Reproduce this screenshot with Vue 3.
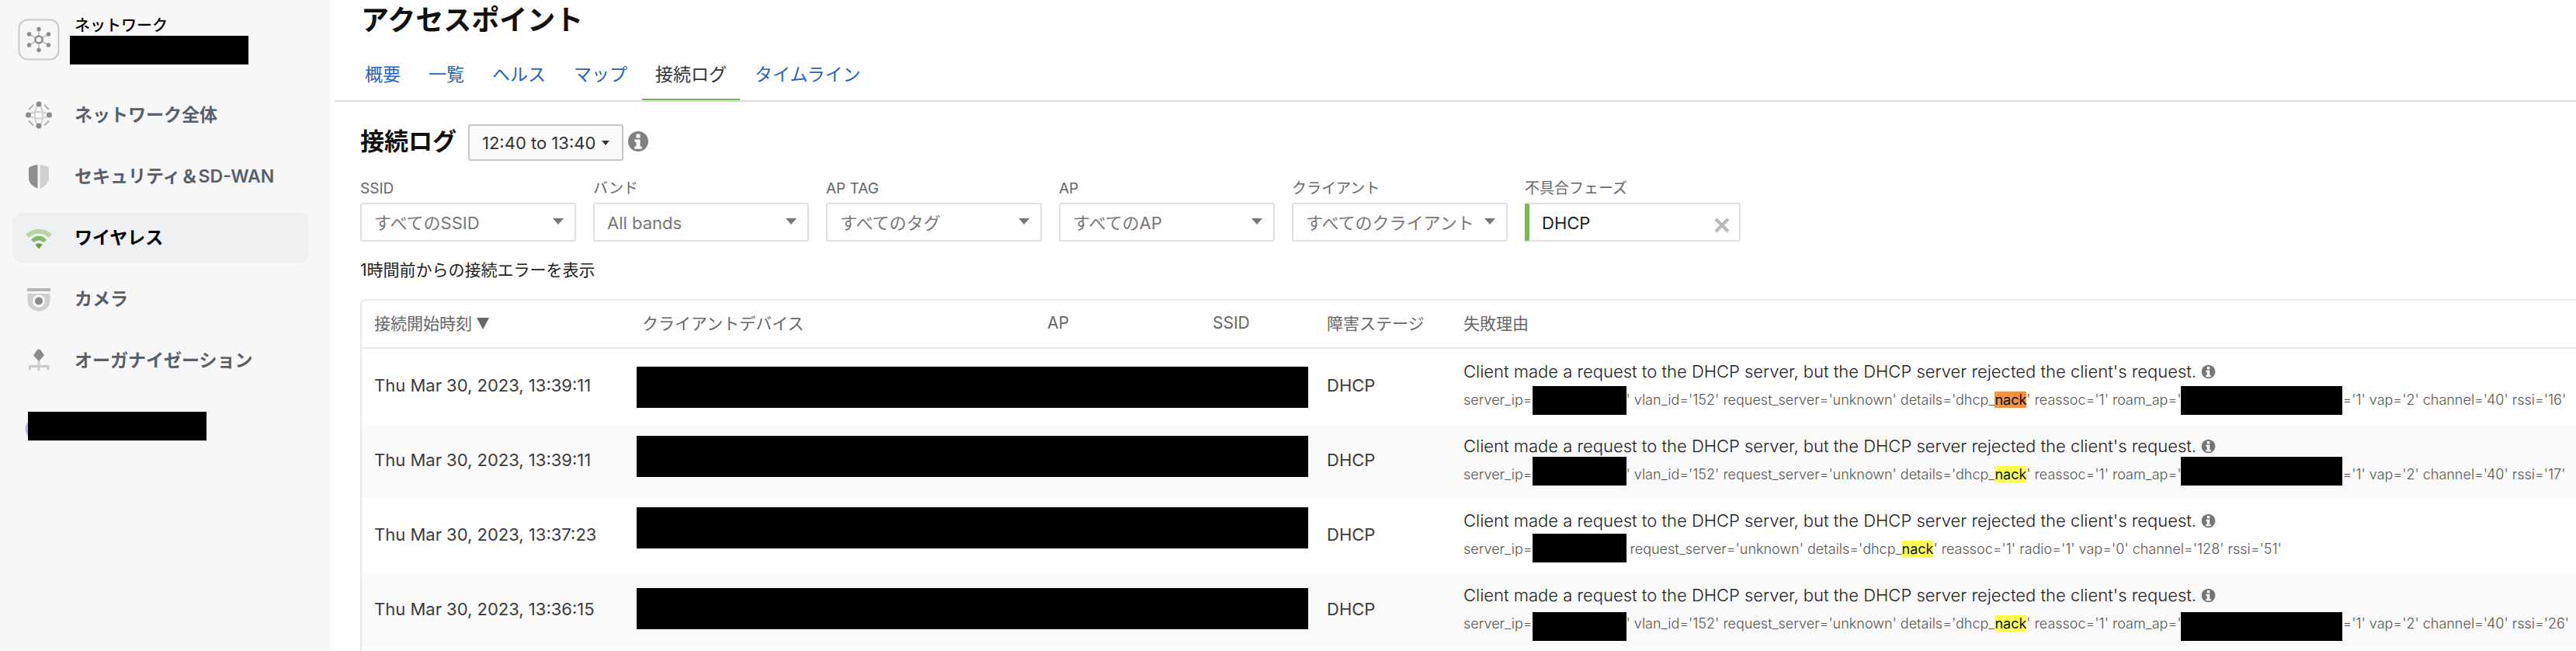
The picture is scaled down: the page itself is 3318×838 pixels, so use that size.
<script setup>
import { ref } from 'vue'

const navItems = [
  { id: 'network', label: 'ネットワーク全体' },
  { id: 'security', label: 'セキュリティ＆SD-WAN' },
  { id: 'wireless', label: 'ワイヤレス', active: true },
  { id: 'camera', label: 'カメラ' },
  { id: 'organization', label: 'オーガナイゼーション' }
]

const tabs = [
  { label: '概要' },
  { label: '一覧' },
  { label: 'ヘルス' },
  { label: 'マップ' },
  { label: '接続ログ', active: true },
  { label: 'タイムライン' }
]

const filters = [
  { id: 'ssid', label: 'SSID', value: 'すべてのSSID' },
  { id: 'band', label: 'バンド', value: 'All bands' },
  { id: 'tag', label: 'AP TAG', value: 'すべてのタグ' },
  { id: 'ap', label: 'AP', value: 'すべてのAP' },
  { id: 'client', label: 'クライアント', value: 'すべてのクライアント' }
]

const phase = ref('DHCP')

const message = "Client made a request to the DHCP server, but the DHCP server rejected the client's request."

// barTop / maskTop: where the redaction bars lie within the row and the detail line
const rows = [
  {
    time: 'Thu Mar 30, 2023, 13:39:11', barTop: 23, maskTop: 1, current: true,
    before: "' vlan_id='152' request_server='unknown' details='dhcp_",
    after: "' reassoc='1' roam_ap='", tail: "='1' vap='2' channel='40' rssi='16'"
  },
  {
    time: 'Thu Mar 30, 2023, 13:39:11', barTop: 16, maskTop: -4,
    before: "' vlan_id='152' request_server='unknown' details='dhcp_",
    after: "' reassoc='1' roam_ap='", tail: "='1' vap='2' channel='40' rssi='17'"
  },
  {
    time: 'Thu Mar 30, 2023, 13:37:23', barTop: 12, maskTop: -1,
    before: " request_server='unknown' details='dhcp_",
    after: "' reassoc='1' radio='1' vap='0' channel='128' rssi='51'"
  },
  {
    time: 'Thu Mar 30, 2023, 13:36:15', barTop: 20, maskTop: 4,
    before: "' vlan_id='152' request_server='unknown' details='dhcp_",
    after: "' reassoc='1' roam_ap='", tail: "='1' vap='2' channel='40' rssi='26'"
  }
]
</script>

<template>
  <div class="layout">
    <aside class="sidebar">
      <div class="network">
        <svg class="network-icon" viewBox="0 0 54 54" aria-hidden="true">
          <rect x="1.5" y="1.5" width="51" height="51" rx="11" fill="none" stroke="#cbcbcb" stroke-width="2" />
          <g stroke="#bdbdbd" stroke-width="1.5">
            <path d="M27 14v26M14.500 20l25 14M14.500 34l25-14" />
          </g>
          <circle cx="27" cy="27" r="4.500" fill="#f7f7f7" stroke="#8b8b8b" stroke-width="2.500" />
          <g fill="#8b8b8b">
            <circle cx="27" cy="13.500" r="2.700" /><circle cx="27" cy="40.500" r="2.700" />
            <circle cx="14.500" cy="20" r="2.700" /><circle cx="39.500" cy="20" r="2.700" />
            <circle cx="14.500" cy="34" r="2.700" /><circle cx="39.500" cy="34" r="2.700" />
          </g>
        </svg>
        <div class="network-text">
          <span class="network-label">ネットワーク</span>
          <span class="redacted network-name"></span>
        </div>
      </div>

      <nav class="nav">
        <a v-for="item in navItems" :key="item.id" href="#" class="nav-item" :class="{ active: item.active }">
          <svg class="nav-icon" viewBox="0 0 36 36" aria-hidden="true">
            <g v-if="item.id === 'network'">
              <g fill="none" stroke="#d0d0d0" stroke-width="2">
                <path d="M18 4C11 12 11 26 18 32C25 26 25 12 18 4ZM4 18C12 12.500 24 12.500 32 18C24 24 12 24 4 18Z" />
              </g>
              <path d="M5 11l6.500-6M25 5l6 6M5 25.500l6 6M31 25.500l-6 6" stroke="#b0b0b0" stroke-width="2" />
              <g fill="#8b8b8b">
                <circle cx="18" cy="4" r="3.500" /><circle cx="18" cy="32" r="3.500" />
                <circle cx="4.500" cy="18" r="3.500" /><circle cx="31.500" cy="18" r="3.500" />
              </g>
            </g>
            <g v-else-if="item.id === 'security'">
              <path d="M16.500 3C12.500 3.300 9 4.500 5 7V20C5 27 11 31.500 16.500 33.500Z" fill="#8e8e8e" />
              <path d="M19.500 3C23.500 3.300 27 4.500 31 7V20C31 27 25 31.500 19.500 33.500Z" fill="#d0d0d0" />
            </g>
            <g v-else-if="item.id === 'wireless'">
              <path d="M1 14C10 4.700 26 4.700 35 14L31 18C24 11 12 11 5 18Z" fill="#b7d4a3" />
              <path d="M8 20.500C13.500 14.200 22.500 14.200 28 20.500L24.500 24C21 20.500 15 20.500 11.500 24Z" fill="#85b963" />
              <path d="M13.500 27C16 24.800 20 24.800 22.500 27L18 32.500Z" fill="#5fa52f" />
            </g>
            <g v-else-if="item.id === 'camera'">
              <path d="M3 4h30v4H3Z" fill="#b5b5b5" />
              <path d="M3.500 11h29V19.500C32.500 38 3.500 38 3.500 19.500Z" fill="#cfcfcf" />
              <circle cx="18" cy="20.500" r="8" fill="#f7f7f7" />
              <circle cx="18" cy="20.500" r="5" fill="#8b8b8b" />
            </g>
            <g v-else>
              <path d="M6.500 30V25.500H30V30M18 19V31" fill="none" stroke="#cbcbcb" stroke-width="3" />
              <path d="M18 3.500Q20 3.500 21 5.500L25 11.500L18 19L11 11.500L15 5.500Q16 3.500 18 3.500Z" fill="#8b8b8b" />
            </g>
          </svg>
          <span class="nav-label">{{ item.label }}</span>
        </a>
      </nav>
      <div class="user">
        <span class="redacted user-name"></span>
      </div>
    </aside>

    <main class="main">
      <h1 class="title">アクセスポイント</h1>
      <nav class="tabs">
        <a v-for="tab in tabs" :key="tab.label" href="#" class="tab" :class="{ active: tab.active }">{{ tab.label }}</a>
      </nav>

      <div class="content">
        <div class="heading">
          <h2 class="subtitle">接続ログ</h2>
          <button type="button" class="range">
            12:40 to 13:40
            <svg class="range-caret" viewBox="0 0 10 6" aria-hidden="true"><path d="M0 0h10L5 6Z" fill="#333" /></svg>
          </button>
          <svg class="info-large" viewBox="0 0 28 28" aria-hidden="true">
            <circle cx="14" cy="14" r="13" fill="#808080" />
            <path d="M11.500 4.500h5v5h-5ZM9.500 11.500h7v9h2.200v3.300H9.300v-3.300h2.200v-5.700h-2Z" fill="#fff" />
          </svg>
        </div>

        <div class="filters">
          <div v-for="filter in filters" :key="filter.id" class="filter">
            <label class="filter-label" :for="filter.id">{{ filter.label }}</label>
            <div class="field">
              <select :id="filter.id" class="control"><option>{{ filter.value }}</option></select>
              <svg class="field-caret" viewBox="0 0 14 8" aria-hidden="true"><path d="M0 0h14L7 8Z" fill="#777" /></svg>
            </div>
          </div>
          <div class="filter">
            <label class="filter-label" for="phase">不具合フェーズ</label>
            <div class="field selected">
              <input id="phase" v-model="phase" type="text" class="control">
              <button type="button" class="clear" aria-label="クリア" @click="phase = ''">
                <svg viewBox="0 0 20 20" aria-hidden="true"><path d="M2 2l16 16M18 2L2 18" stroke="#b8b8b8" stroke-width="4" /></svg>
              </button>
            </div>
          </div>
        </div>

        <p class="summary">1時間前からの接続エラーを表示</p>

        <div class="table-wrap">
          <table class="table">
            <colgroup>
              <col class="col-time"><col class="col-client"><col class="col-ap"><col class="col-ssid"><col class="col-stage"><col>
            </colgroup>
            <thead>
              <tr>
                <th>接続開始時刻<svg class="sort" viewBox="0 0 16 15" aria-hidden="true"><path d="M0 0h16L8 15Z" fill="#666" /></svg></th>
                <th>クライアントデバイス</th>
                <th>AP</th>
                <th>SSID</th>
                <th>障害ステージ</th>
                <th>失敗理由</th>
              </tr>
            </thead>
            <tbody>
              <tr v-for="(row, i) in rows" :key="i">
                <td>{{ row.time }}</td>
                <td colspan="3" class="masked"><span class="redacted bar" :style="{ top: row.barTop + 'px' }"></span></td>
                <td>DHCP</td>
                <td class="reason">
                  <div class="message">{{ message }} <svg class="info" viewBox="0 0 28 28" aria-hidden="true">
                    <circle cx="14" cy="14" r="13" fill="#757575" />
                    <path d="M11.500 4.500h5v5h-5ZM9.500 11.500h7v9h2.200v3.300H9.300v-3.300h2.200v-5.700h-2Z" fill="#fff" />
                  </svg></div>
                  <div class="detail"><span>server_ip=</span><span class="slot slot-ip"><span class="redacted mask" :style="{ top: row.maskTop + 'px' }"></span></span><span>{{ row.before }}</span><mark :class="{ current: row.current }">nack</mark><span>{{ row.after }}</span><template v-if="row.tail"><span class="slot slot-ap"><span class="redacted mask" :style="{ top: row.maskTop + 'px' }"></span></span><span>{{ row.tail }}</span></template></div>
                </td>
              </tr>
            </tbody>
          </table>
        </div>
      </div>
    </main>
  </div>
</template>

<style>
body {
  margin: 0;
  background: #fff;
}
</style>

<style scoped>
.layout {
  display: flex;
  min-height: 100vh;
  font-family: Inter, "Noto Sans CJK JP", sans-serif;
  font-size: 22px;
  color: #3c3c3c;
}

.layout * {
  box-sizing: border-box;
}

.redacted {
  display: block;
  background: #000;
}

.sidebar {
  flex: none;
  width: 425px;
  padding: 20px 27px 0 16px;
  background: #f7f7f7;
}

.network {
  display: flex;
  gap: 13px;
  padding-left: 7px;
}

.network-icon {
  width: 54px;
  height: 54px;
  margin-top: 4px;
}

.network-label {
  display: block;
  padding-left: 6px;
  font-size: 20px;
  font-weight: 500;
  line-height: 26px;
  color: #000;
}

.network-name,
.user-name {
  width: 230px;
  height: 37px;
}

.nav {
  display: grid;
  gap: 13px;
  margin-top: 32px;
}

.nav-item {
  display: flex;
  align-items: center;
  gap: 28px;
  height: 66px;
  padding-left: 16px;
  border-radius: 14px;
  font-size: 23px;
  font-weight: 600;
  color: #58606b;
  text-decoration: none;
  white-space: nowrap;
}

.nav-item.active {
  background: #eff0f2;
  color: #000;
}

.nav-icon {
  width: 36px;
  height: 36px;
}

.nav-label {
  padding-bottom: 4px;
}

.user {
  margin: 33px 0 0 16px;
  padding-left: 4px;
  background: radial-gradient(circle at 14px 22px, #b9b2e8 13px, transparent 14px);
}

.main {
  display: flex;
  flex-direction: column;
  flex: 1;
  min-width: 0;
  margin-left: 6px;
}

.title {
  margin: 0;
  padding-left: 34px;
  font-size: 36px;
  font-weight: 600;
  line-height: 52px;
  color: #111;
}

.tabs {
  display: flex;
  gap: 2px;
  margin-top: 14px;
  padding-left: 22px;
  border-bottom: 2px solid #ddd;
}

.tab {
  padding: 0 17px;
  border-bottom: 2px solid transparent;
  font-size: 23px;
  line-height: 61px;
  color: #1f66c7;
  text-decoration: none;
}

.tab.active {
  border-bottom-color: #6fb453;
  color: #333;
}

.content {
  display: flex;
  flex-direction: column;
  flex: 1;
  padding: 29px 0 0 33px;
}

.heading {
  display: flex;
  align-items: center;
}

.subtitle {
  margin: 0;
  padding-bottom: 4px;
  font-size: 31px;
  font-weight: 600;
  line-height: 42px;
  color: #111;
}

.range {
  display: flex;
  align-items: center;
  gap: 8px;
  height: 47px;
  margin-left: 15px;
  padding: 0 16px;
  border: 2px solid #c8c8c8;
  border-radius: 3px;
  background: #fafafa;
  font: inherit;
  color: #333;
}

.range-caret {
  width: 10px;
  height: 6px;
}

.info-large {
  width: 28px;
  height: 28px;
  margin: 0 0 4px 5px;
}

.filters {
  display: flex;
  gap: 22px;
  margin-top: 22px;
}

.filter {
  width: 278px;
}

.filter-label {
  display: block;
  margin-bottom: 4px;
  font-size: 19px;
  line-height: 28px;
  color: #666;
}

.field {
  position: relative;
}

.control {
  display: block;
  width: 100%;
  height: 50px;
  padding: 2px 16px 0;
  appearance: none;
  border: 2px solid #e0e0e0;
  border-radius: 3px;
  background: #fff;
  font: inherit;
  color: #777;
}

.field-caret {
  position: absolute;
  top: 20px;
  right: 16px;
  width: 14px;
  height: 8px;
  pointer-events: none;
}

.selected .control {
  border-left: 6px solid #7cb94b;
  color: #222;
}

.clear {
  position: absolute;
  top: 19px;
  right: 14px;
  width: 20px;
  height: 20px;
  padding: 0;
  border: 0;
  background: none;
}

.clear svg {
  display: block;
}

.summary {
  margin: 23px 0;
  font-size: 21px;
  line-height: 28px;
  color: #222;
}

.table-wrap {
  flex: 1;
  border: solid #e8e8e8;
  border-width: 2px 0 0 2px;
  border-top-left-radius: 6px;
}

.table {
  width: 100%;
  table-layout: fixed;
  border-spacing: 0;
}

.col-time { width: 345px; }
.col-client { width: 522px; }
.col-ap { width: 213px; }
.col-ssid { width: 147px; }
.col-stage { width: 176px; }

th {
  height: 62px;
  padding: 0 0 4px 16px;
  border-bottom: 2px solid #e8e8e8;
  font-size: 21px;
  font-weight: 400;
  text-align: left;
  color: #666;
}

.sort {
  width: 16px;
  height: 15px;
  margin-left: 6px;
}

td {
  height: 96px;
  padding: 0 0 2px 16px;
  white-space: nowrap;
}

tbody tr:nth-child(even) {
  background: #fafafa;
}

.masked {
  position: relative;
}

.bar {
  position: absolute;
  left: 9px;
  right: 8px;
  height: 53px;
}

.reason {
  padding-bottom: 0;
  font-weight: 300;
}

.message {
  line-height: 36px;
  color: #222;
}

.info {
  width: 19px;
  height: 19px;
  vertical-align: -2px;
}

.detail {
  font-size: 18px;
  line-height: 38px;
  color: #555;
  white-space: pre;
}

.slot {
  display: inline-block;
  position: relative;
  height: 38px;
  vertical-align: top;
}

.slot-ip {
  width: 121px;
}

.slot-ap {
  width: 208px;
}

.mask {
  position: absolute;
  left: 0;
  right: 0;
  height: 37px;
}

mark {
  background: #ffff4f;
  font-weight: 400;
  color: #111;
}

mark.current {
  background: #f4913e;
}
</style>
